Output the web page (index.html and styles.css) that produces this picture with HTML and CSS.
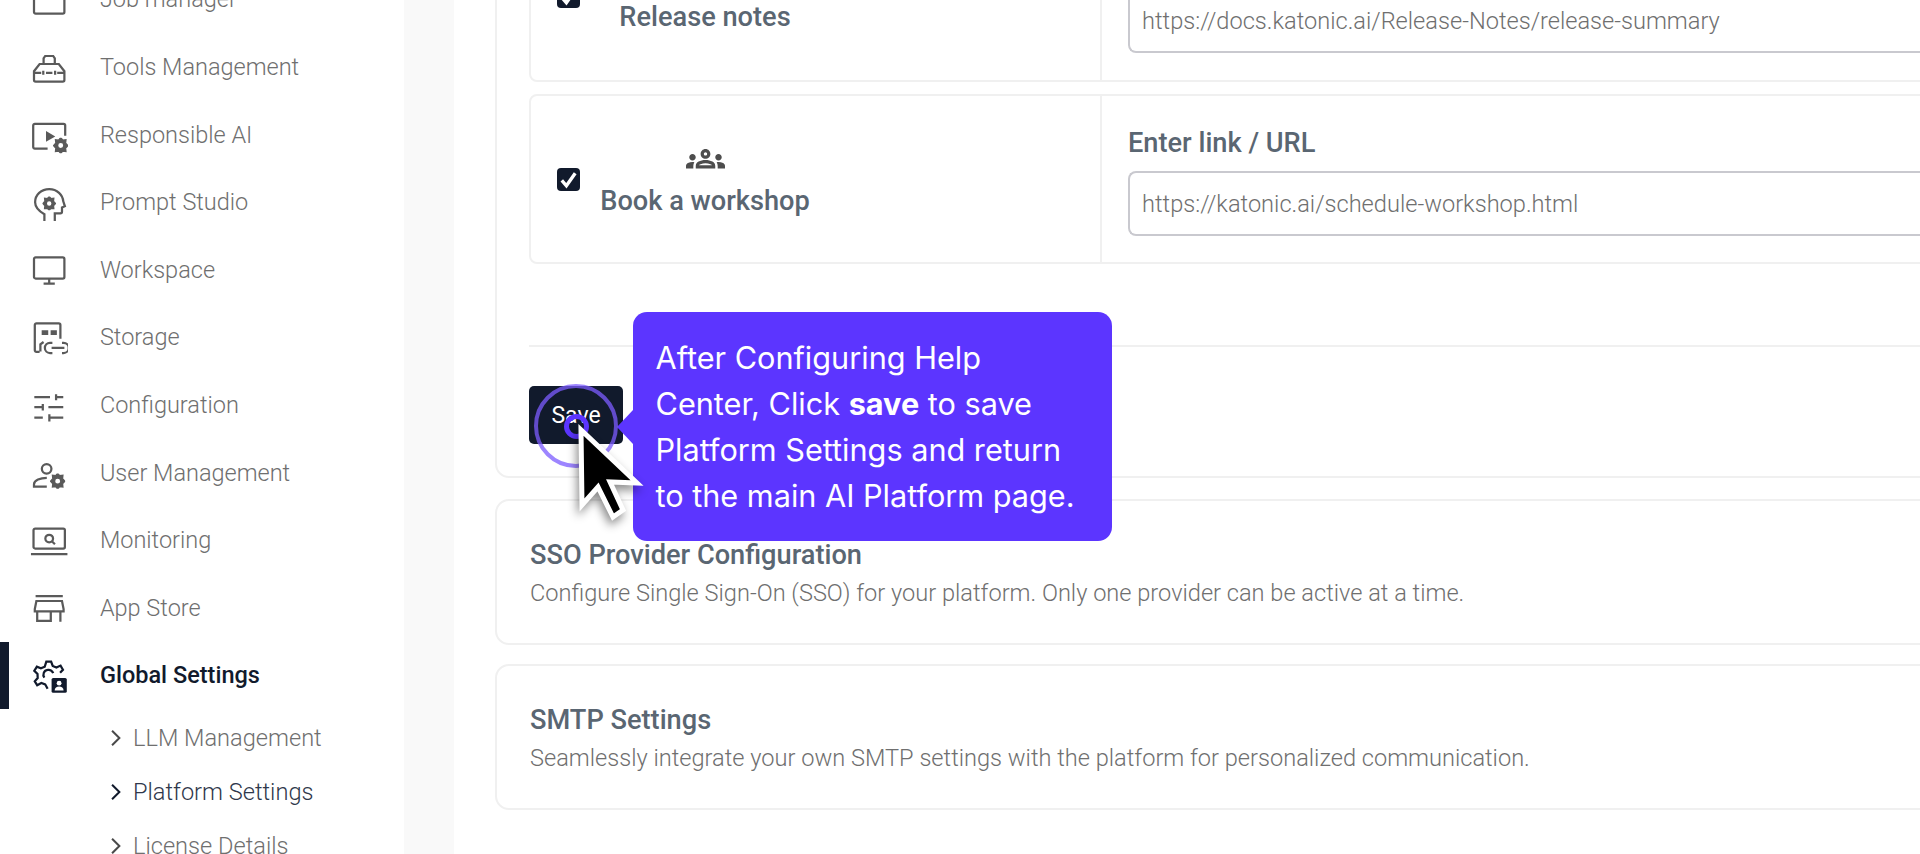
FILE: index.html
```html
<!DOCTYPE html>
<html lang="en">
<head>
<meta charset="utf-8">
<title>Platform Settings</title>
<link rel="stylesheet" href="styles.css">
</head>
<body>
<svg class="defs" width="0" height="0" aria-hidden="true">
  <symbol id="gear" viewBox="-5 -5 10 10">
    <path d="M0-4.800 1.100-3.300 3.100-3.500 2.900-1.600 4.300 0 2.900 1.600 3.100 3.500 1.100 3.300 0 4.800-1.100 3.300-3.100 3.500-2.900 1.600-4.300 0-2.900-1.600-3.100-3.500-1.100-3.300Z" fill="currentColor"/>
    <circle r="2.300" fill="#fff"/>
  </symbol>
</svg>
<div class="shell">
  <aside class="sidebar">
    <nav class="nav">
      <a class="item"><svg class="ico" viewBox="0 0 24 24"><rect x="2.500" y="3" width="19" height="18" rx="1"/></svg><span>Job manager</span></a>
      <a class="item"><svg class="ico" viewBox="0 0 24 24"><path d="M2.500 14.500V20a1 1 0 0 0 1 1h17a1 1 0 0 0 1-1v-5.500L18 10H6zM8.500 10V6.500L9.500 5h5l1 1.500V10M2.500 15.500h4.500m3 0h4m3 0h4.500M8.300 14.300v2.400M15.700 14.300v2.400"/></svg><span>Tools Management</span></a>
      <a class="item"><svg class="ico" viewBox="0 0 24 24"><path d="M11 21H3a1 1 0 0 1-1-1V6.500a1 1 0 0 1 1-1h18a1 1 0 0 1 1 1V13"/><path class="solid" d="M10 10l5.800 3.400L10 16.800z"/><use href="#gear" x="14.400" y="14.300" width="9.600" height="9.600"/></svg><span>Responsible AI</span></a>
      <a class="item"><svg class="ico" viewBox="0 0 24 24"><path d="M9 24v-4.500C5.500 17.500 3.200 15 3.200 12 3.200 7.500 7 3.800 12 3.800c5 0 8.500 3.700 8.800 7.700l1 3-1.800.8v2.700a1 1 0 0 1-1 1h-3.500V24"/><use href="#gear" x="7.700" y="8.500" width="8.600" height="8.600"/></svg><span>Prompt Studio</span></a>
      <a class="item"><svg class="ico" viewBox="0 0 24 24"><rect x="2.500" y="4" width="19" height="13.200" rx="1"/><path d="M12 17.200v3M8.500 20.400h7"/></svg><span>Workspace</span></a>
      <a class="item"><svg class="ico" viewBox="0 0 24 24"><path d="M6 21.200H4a1 1 0 0 1-1-1V4.400a1 1 0 0 1 1-1h14a1 1 0 0 1 1 1V13M6.500 21v-4.500l2-1.500"/><path class="solid" d="M7.300 7.600h4.100v3.100H7.300zM12.900 7.600h3.900v3.100h-3.900z"/><path d="M14 15.500h-1.500a3.200 3.200 0 0 0 0 6.400H14M20 15.500h1a3.200 3.200 0 0 1 0 6.400h-1M13.500 18.700h8"/></svg><span>Storage</span></a>
      <a class="item"><svg class="ico" viewBox="0 0 24 24"><path d="M2.700 7h9.800M16.300 7h4.500M16.300 5.200v3.700M2.700 13.200h5.300M8 11.200v4.100M11.500 13.200h9.300M2.700 19.800H8M12.100 17.700v4.500M12.100 19.800h8.700"/></svg><span>Configuration</span></a>
      <a class="item"><svg class="ico" viewBox="0 0 24 24"><circle cx="10.400" cy="9.900" r="3"/><path d="M10.500 15.500C6.500 15.500 2.500 17 2.500 19.500V21h8"/><use href="#gear" x="12.500" y="12.800" width="9.600" height="9.600"/></svg><span>User Management</span></a>
      <a class="item"><svg class="ico" viewBox="0 0 24 24"><rect x="2.200" y="4.700" width="19.600" height="12.500" rx="1"/><path d="M.6 20.700h22.800"/><circle cx="12" cy="11" r="2.400"/><path d="M13.800 12.800l1.800 1.700"/></svg><span>Monitoring</span></a>
      <a class="item"><svg class="ico" viewBox="0 0 24 24"><path d="M3.500 4.500h17M4 7.500l-1 5V14h18v-1.500l-1-5zM4.500 14v6h8.500v-6M19 14v6.500"/></svg><span>App Store</span></a>
      <a class="item active"><svg class="ico" viewBox="0 0 24 24"><path d="M11 20.500l-1.500-2.800-2.400-.8-2.600 1.400-1.500-2.500 1.800-2-.1-2.600-2-1.900 1.600-2.600 2.500 1 2.400-1L10.200 3.500h3l1 2.700 2.300 1 2.600-1.200 1.500 2.600-1.800 1.900"/><path d="M9 13.500a3 3 0 0 1 2-4.800 3 3 0 0 1 3.500 2"/><rect class="solid" x="13.500" y="13.700" width="9.500" height="9.300" rx="1"/><circle class="hole" cx="18.200" cy="17" r="1.500"/><path class="hole" d="M15.400 21.500c0-1.500 1.300-2.500 2.800-2.500s2.800 1 2.800 2.500z"/></svg><span>Global Settings</span></a>
    </nav>
    <ul class="sub">
      <li><svg class="chev" viewBox="0 0 10 16"><path d="M1.500 1.500 8 8l-6.500 6.500"/></svg>LLM Management</li>
      <li class="current"><svg class="chev" viewBox="0 0 10 16"><path d="M1.500 1.500 8 8l-6.500 6.500"/></svg>Platform Settings</li>
      <li><svg class="chev" viewBox="0 0 10 16"><path d="M1.500 1.500 8 8l-6.500 6.500"/></svg>License Details</li>
    </ul>
  </aside>
  <div class="gutter"></div>
  <main class="main">
    <section class="card help">
      <div class="row">
        <div class="pick">
          <span class="check"><svg viewBox="0 0 24 24"><path d="M5 13l4.800 5.500L19 5.500"/></svg></span>
          <div class="label"><span class="label-icon"></span><strong>Release notes</strong></div>
        </div>
        <div class="link">
          <label class="link-title">Enter link / URL</label>
          <input class="field" readonly value="https://docs.katonic.ai/Release-Notes/release-summary">
        </div>
      </div>
      <div class="row">
        <div class="pick">
          <span class="check"><svg viewBox="0 0 24 24"><path d="M5 13l4.800 5.500L19 5.500"/></svg></span>
          <div class="label">
            <svg class="label-icon" viewBox="0 6 24 12"><path d="M4,13c1.100,0,2-0.900,2-2c0-1.100-0.900-2-2-2s-2,0.900-2,2C2,12.100,2.900,13,4,13z M5.130,14.100C4.760,14.040,4.390,14,4,14c-0.990,0-1.930,0.210-2.780,0.580C0.480,14.900,0,15.620,0,16.430V18l4.500,0v-1.610C4.500,15.560,4.730,14.780,5.130,14.100z M20,13c1.100,0,2-0.900,2-2c0-1.100-0.900-2-2-2s-2,0.900-2,2C18,12.100,18.900,13,20,13z M24,16.430c0-0.810-0.480-1.530-1.220-1.850C21.930,14.210,20.990,14,20,14c-0.390,0-0.760,0.040-1.130,0.100c0.400,0.680,0.630,1.460,0.630,2.290V18l4.500,0V16.430z M16.240,13.650c-1.170-0.520-2.610-0.900-4.240-0.900c-1.630,0-3.070,0.390-4.240,0.900C6.680,14.130,6,15.210,6,16.390V18h12v-1.610C18,15.210,17.320,14.130,16.240,13.650z M8.070,16c0.090-0.230,0.130-0.390,0.910-0.690c0.970-0.380,1.990-0.560,3.020-0.560s2.050,0.180,3.020,0.560c0.770,0.300,0.810,0.460,0.910,0.690H8.070z M12,8c0.550,0,1,0.450,1,1s-0.450,1-1,1s-1-0.450-1-1S11.450,8,12,8 M12,6c-1.660,0-3,1.340-3,3c0,1.660,1.340,3,3,3s3-1.340,3-3C15,7.340,13.660,6,12,6L12,6z"/></svg>
            <strong>Book a workshop</strong>
          </div>
        </div>
        <div class="link">
          <label class="link-title">Enter link / URL</label>
          <input class="field" readonly value="https://katonic.ai/schedule-workshop.html">
        </div>
      </div>
      <hr class="rule">
      <button class="save" type="button">Save</button>
    </section>
    <section class="card plain">
      <h3>SSO Provider Configuration</h3>
      <p>Configure Single Sign-On (SSO) for your platform. Only one provider can be active at a time.</p>
    </section>
    <section class="card plain">
      <h3>SMTP Settings</h3>
      <p>Seamlessly integrate your own SMTP settings with the platform for personalized communication.</p>
    </section>
  </main>
  <div class="tip">
    <p>After Configuring Help Center, Click <b>save</b> to save Platform Settings and return to the main AI Platform page.</p>
  </div>
  <div class="ring"></div>
  <div class="dot"></div>
  <svg class="cursor" viewBox="0 0 70 100"><path d="M6 6 7 81 23 63 38 93 48 86 35 58 62 59Z"/></svg>
</div>
</body>
</html>
```
FILE: styles.css
```css
* { box-sizing: border-box; }
html, body { margin: 0; height: 100%; overflow: hidden; background: #fff; }
body { font-family: Roboto, "Liberation Sans", sans-serif; }
.defs { position: absolute; }
.shell { display: flex; height: 854px; position: relative; overflow: hidden; }

.sidebar { width: 404px; flex: none; background: #fff; overflow: hidden; }
.nav { display: grid; grid-auto-rows: 67.6px; margin-top: -34.400px; }
.item { display: flex; align-items: center; gap: 31.500px; padding-left: 30px; font-size: 23.500px; font-weight: 300; color: #6f6f6f; }
.item.active { color: #111a2c; font-weight: 500; box-shadow: inset 9px 0 0 #111a2c; }
.ico { width: 38.4px; height: 38.4px; flex: none; fill: none; stroke: #5a5a5a; stroke-width: 1.400; color: #5a5a5a; }
.ico .solid { fill: #5a5a5a; stroke: none; }
.active .ico { stroke: #111a2c; color: #111a2c; }
.active .ico .solid { fill: #111a2c; }
.active .ico .hole { fill: #fff; stroke: none; }
.sub { list-style: none; margin: 1.400px 0 0; padding: 0 0 0 110px; display: grid; grid-auto-rows: 54px; font-size: 23.600px; font-weight: 300; color: #6f6f6f; }
.sub li { display: flex; align-items: center; gap: 11px; }
.sub .current { color: #2f384b; }
.chev { width: 12px; height: 18px; flex: none; fill: none; stroke: #4a4a4a; stroke-width: 1.800; }
.current .chev { stroke: #111a2c; }

.gutter { width: 50px; flex: none; background: #f9f9f9; }
.main { flex: 1; min-width: 0; margin-top: -121px; padding: 0 0 0 41px; display: flex; flex-direction: column; gap: 19.500px; }
.card { border: 2px solid #f0f0f0; border-radius: 14px; margin-right: -40px; background: #fff; }
.help { padding: 30px 0 32px 32px; height: 598.500px; flex: none; margin-bottom: 1.500px; }
.row { display: flex; height: 170px; border: 2px solid #f0f0f0; border-radius: 8px; margin-bottom: 12px; }
.row:first-child { height: 171px; }
.row:first-child .label { margin-top: 5px; }
.pick { width: 571px; flex: none; display: flex; align-items: center; padding-left: 26px; border-right: 2px solid #f0f0f0; }
.check { width: 23px; height: 23px; flex: none; background: #111a2c; border-radius: 4px; display: flex; }
.check svg { fill: none; stroke: #fff; stroke-width: 3.500; }
.label { width: 212px; margin: 8px 0 0 19px; display: flex; flex-direction: column; align-items: center; gap: 16px; }
.label strong { font-size: 27.200px; font-weight: 500; color: #5a6672; white-space: nowrap; }
.label-icon { width: 39px; height: 19.500px; fill: #4d4d4d; }
.link { flex: 1; padding: 31px 0 0 26px; display: flex; flex-direction: column; gap: 12px; }
.link-title { font-size: 27.200px; font-weight: 500; color: #5a6672; }
.field { height: 65px; border: 2px solid #c9c9cf; border-right: 0; border-radius: 8px 0 0 8px; padding: 0 12px; font: 300 23.600px Roboto, sans-serif; color: #6f6f6f; outline: 0; background: #fff; }
.rule { border: 0; border-top: 2px solid #f0f0f0; margin: 81px 0 39px; }
.save { display: block; width: 94px; height: 58px; background: #111a2c; color: #fff; border: 0; border-radius: 5px; font: 400 23px Roboto, sans-serif; }
.plain { height: 146px; flex: none; padding: 39px 0 0 33px; }
.plain h3 { margin: 0; font-size: 27.200px; font-weight: 500; color: #5a6672; line-height: 30px; }
.plain p { margin: 9px 0 0; font-size: 23.600px; font-weight: 300; color: #6f6f6f; line-height: 28px; }

.tip { position: absolute; left: 633px; top: 312px; width: 479px; height: 229px; background: #5c35ff; border-radius: 14px; padding: 23px 27px 0 22.500px; color: #fff; font-family: Inter, sans-serif; font-size: 30.650px; line-height: 46px; }
.tip p { margin: 0; }
.tip::before { content: ""; position: absolute; left: -16px; top: 98px; border-style: solid; border-width: 17px 16px 17px 0; border-color: transparent #5c35ff transparent transparent; }
.ring { position: absolute; left: 534px; top: 384px; width: 84px; height: 84px; border-radius: 50%; border: 4px solid rgba(124, 92, 255, .75); }
.dot { position: absolute; left: 564px; top: 414px; width: 25px; height: 25px; border-radius: 50%; border: 5px solid #5c35ff; }
.cursor { position: absolute; left: 575px; top: 424px; width: 70px; height: 100px; overflow: visible; fill: #000; stroke: #fff; stroke-width: 5; filter: drop-shadow(-2px 5px 5px rgba(0,0,0,.45)); }
```
